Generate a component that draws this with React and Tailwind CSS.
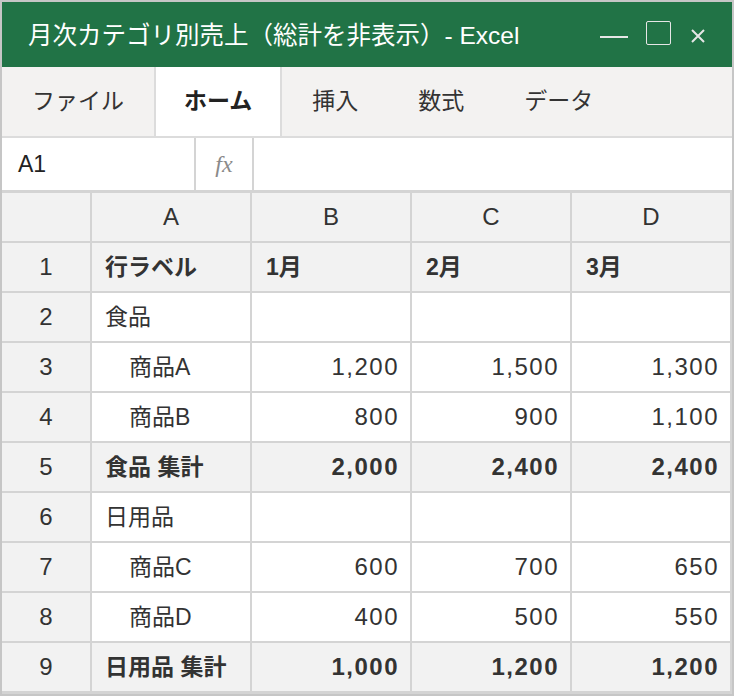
import React from 'react'

const rows = [
  { n: 1, a: '行ラベル', v: ['1月', '2月', '3月'], head: true },
  { n: 2, a: '食品', v: ['', '', ''] },
  { n: 3, a: '商品A', v: ['1,200', '1,500', '1,300'], indent: true },
  { n: 4, a: '商品B', v: ['800', '900', '1,100'], indent: true },
  { n: 5, a: '食品 集計', v: ['2,000', '2,400', '2,400'], total: true },
  { n: 6, a: '日用品', v: ['', '', ''] },
  { n: 7, a: '商品C', v: ['600', '700', '650'], indent: true },
  { n: 8, a: '商品D', v: ['400', '500', '550'], indent: true },
  { n: 9, a: '日用品 集計', v: ['1,000', '1,200', '1,200'], total: true },
]

const tabs = ['ファイル', 'ホーム', '挿入', '数式', 'データ']

function Cell({ children, className = '' }) {
  return <div className={'h-[48px] flex items-center text-[#333] ' + className}>{children}</div>
}

export default function App() {
  return (
    <div
      className="w-[734px] h-[696px] border-2 border-[#c6c6c6] flex flex-col bg-white overflow-hidden"
      style={{ fontFamily: '"Liberation Sans", "Noto Sans CJK JP", sans-serif' }}
    >
      {/* title bar */}
      <div className="h-[65px] shrink-0 bg-[#217346] flex items-center pl-[26px] pr-[27px] pt-[4px]">
        <span className="text-[24.5px] text-white">月次カテゴリ別売上（総計を非表示）- Excel</span>
        <div className="ml-auto flex items-center text-white">
          <div className="w-[28px] h-[2px] bg-[#e6e6e6] mr-[18px]" />
          <div className="w-[25px] h-[24px] border-[1.5px] border-[#e6e6e6] rounded-[2px] mr-[20px] -mt-[8px]" />
          <svg width="14" height="14" viewBox="0 0 14 14" className="-mt-[1px]">
            <path d="M1 1L13 13M13 1L1 13" stroke="#e6e6e6" strokeWidth="2" />
          </svg>
        </div>
      </div>

      {/* tabs */}
      <div className="h-[71px] shrink-0 bg-[#f3f2f1] flex border-b-2 border-[#dcdcdc]">
        {tabs.map((t) => (
          t === 'ホーム' ? (
            <div key={t} className="flex items-center px-[28px] bg-white border-x-2 border-[#dcdcdc] text-[23px] font-bold text-[#222]">{t}</div>
          ) : (
            <div key={t} className="flex items-center px-[30px] text-[23px] text-[#333]">{t}</div>
          )
        ))}
      </div>

      {/* formula bar */}
      <div className="h-[52px] shrink-0 flex bg-white">
        <div className="w-[194px] border-r-2 border-[#d4d4d4] flex items-center pl-[16px] text-[23px] text-[#222]">A1</div>
        <div
          className="w-[58px] border-r-2 border-[#d4d4d4] flex items-center justify-center text-[24px] italic text-[#8a8a8a]"
          style={{ fontFamily: '"Liberation Serif", serif' }}
        >
          fx
        </div>
        <div className="flex-1" />
      </div>

      {/* grid */}
      <div className="grid grid-cols-[88px_158px_158px_158px_158px] gap-[2px] bg-[#d4d4d4] pt-[3px] pr-[2px] pb-[3px] text-[23px]">
        <Cell className="bg-[#f2f2f2]" />
        {['A', 'B', 'C', 'D'].map((c) => (
          <Cell key={c} className="bg-[#f2f2f2] justify-center text-[24px]">{c}</Cell>
        ))}
        {rows.map((r) => {
          const gray = r.head || r.total
          const bg = gray ? 'bg-[#f2f2f2]' : 'bg-white'
          const weight = gray ? 'font-bold' : ''
          return (
            <React.Fragment key={r.n}>
              <Cell className="bg-[#f2f2f2] justify-center text-[24px]">{r.n}</Cell>
              <Cell className={`${bg} ${weight} ${r.indent ? 'pl-[37px]' : 'pl-[13px]'}`}>{r.a}</Cell>
              {r.v.map((v, i) => (
                <Cell
                  key={i}
                  className={`${bg} ${weight} ${r.head ? 'pl-[14px]' : 'justify-end pr-[11px] text-[24px] tracking-[1.5px]'}`}
                >
                  {v}
                </Cell>
              ))}
            </React.Fragment>
          )
        })}
      </div>
    </div>
  )
}
